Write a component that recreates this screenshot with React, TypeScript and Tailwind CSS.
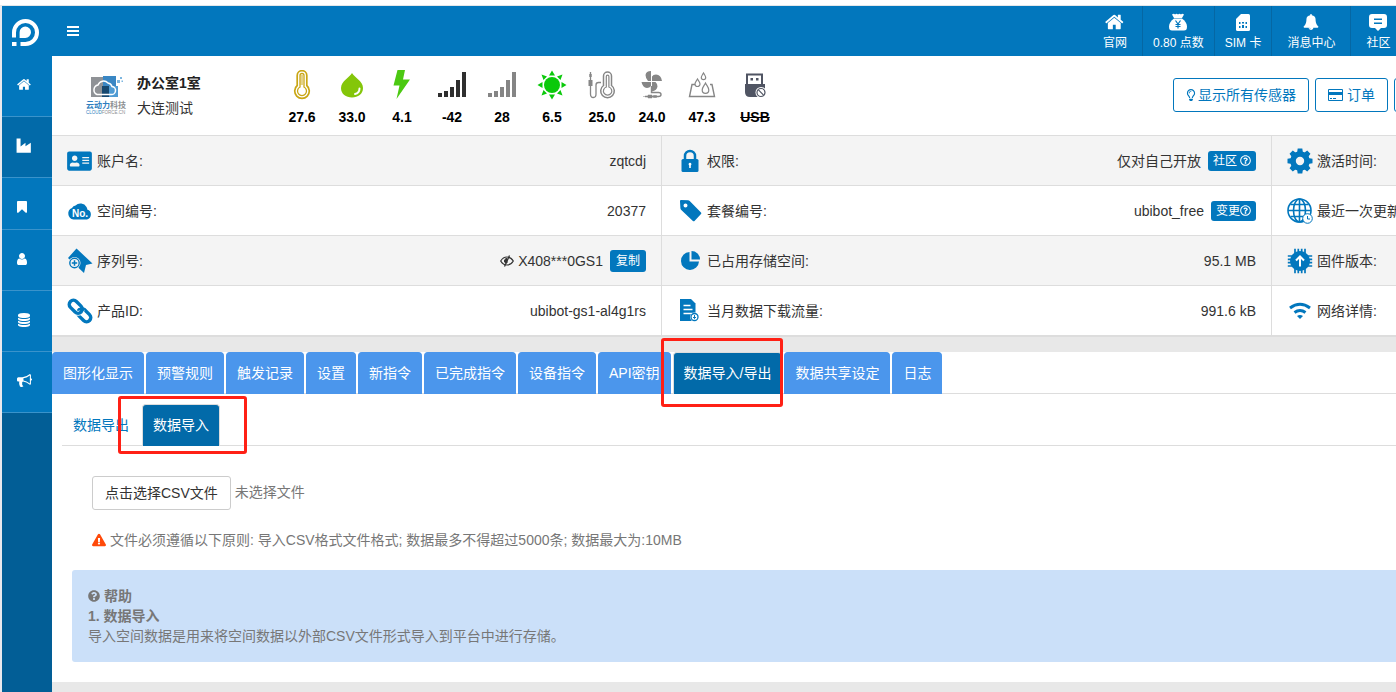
import React from "react";
import {
  FaAddressCard,
  FaExclamationTriangle,
  FaQuestionCircle,
  FaRegLightbulb,
  FaRegQuestionCircle,
} from "react-icons/fa";

const paths = {
  home: "M1408 992v480q0 26-19 45t-45 19h-384v-384h-256v384h-384q-26 0-45-19t-19-45v-480q0-1 .5-3t.5-3l575-474 575 474q1 2 1 6zm223-69l-62 74q-8 9-21 11h-3q-13 0-21-7l-692-577-692 577q-12 8-24 7-13-2-21-11l-62-74q-8-10-7-23.5t11-21.5l719-599q32-26 76-26t76 26l244 204v-195q0-14 9-23t23-9h192q14 0 23 9t9 23v408l219 182q10 8 11 21.5t-7 23.5z",
  industry: "M64 64h448v900l550-420v380l600-380v1120H64z",
  bookmark:
    "M1420 128q23 0 44 9 33 13 52.5 41t19.5 62v1289q0 34-19.5 62t-52.5 41q-19 8-44 8-48 0-83-32l-441-424-441 424q-36 33-83 33-23 0-44-9-33-13-52.5-41t-19.5-62v-1289q0-34 19.5-62t52.5-41q21-9 44-9h1048z",
  user: "M1536 1399q0 109-62.5 187t-150.5 78h-854q-88 0-150.5-78t-62.5-187q0-85 8.5-160.5t31.5-152 58.5-131 94-89 134.5-34.5q131 128 313 128t313-128q76 0 134.5 34.5t94 89 58.5 131 31.5 152 8.5 160.5zm-256-887q0 159-112.5 271.5t-271.5 112.5-271.5-112.5-112.5-271.5 112.5-271.5 271.5-112.5 271.5 112.5 112.5 271.5z",
  database:
    "M896 768q237 0 443-43t325-127v170q0 69-103 128t-280 93.5-385 34.5-385-34.5-280-93.5-103-128v-170q119 84 325 127t443 43zm0 768q237 0 443-43t325-127v170q0 69-103 128t-280 93.5-385 34.5-385-34.5-280-93.5-103-128v-170q119 84 325 127t443 43zm0-384q237 0 443-43t325-127v170q0 69-103 128t-280 93.5-385 34.5-385-34.5-280-93.5-103-128v-170q119 84 325 127t443 43zm0-1152q208 0 385 34.5t280 93.5 103 128v128q0 69-103 128t-280 93.5-385 34.5-385-34.5-280-93.5-103-128v-128q0-69 103-128t280-93.5 385-34.5z",
  bullhorn:
    "M1664 640q53 0 90.5 37.5t37.5 90.5-37.5 90.5-90.5 37.5v384q0 52-38 90t-90 38q-417-347-812-380-58 19-91 66t-31 100.5 40 92.5q-20 33-23 65.5t6 58 33.5 55 48 50 61.5 50.5q-29 58-111.5 83t-168.5 11.5-132-55.5q-7-23-29.5-87.5t-32-94.5-23-89-15-101 3.5-98.5 22-110.5h-122q-66 0-113-47t-47-113v-192q0-66 47-113t113-47h480q435 0 896-384 52 0 90 38t38 90v384zm-128 604v-954q-394 302-768 343v270q377 42 768 341z",
  bell: "M912 1696q0-16-16-16-59 0-101.5-42.5t-42.5-101.5q0-16-16-16t-16 16q0 73 51.5 124.5t124.5 51.5q16 0 16-16zm816-288q0 52-38 90t-90 38h-448q0 106-75 181t-181 75-181-75-75-181h-448q-52 0-90-38t-38-90q50-42 91-88t85-119.5 74.5-158.5 50-206 19.5-260q0-152 117-282.5t307-158.5q-8-19-8-39 0-40 28-68t68-28 68 28 28 68q0 20-8 39 190 28 307 158.5t117 282.5q0 139 19.5 260t50 206 74.5 158.5 85 119.5 91 88z",
};

function Glyph({ name, className }: { name: keyof typeof paths; className: string }) {
  return (
    <svg viewBox="0 0 1792 1792" fill="currentColor" className={className} aria-hidden="true">
      <path d={paths[name]} />
    </svg>
  );
}

/* ---------- Sidebar ---------- */

const sideItems: { name: keyof typeof paths; label: string; cls: string; icon: string }[] = [
  { name: "home", label: "首页", cls: "h-[61px] bg-[#0277bd] pr-[6px] pb-[3px]", icon: "size-[15px]" },
  { name: "industry", label: "产品", cls: "h-[61px] bg-[#026aa9] pr-[6px] pb-[3px]", icon: "size-4" },
  { name: "bookmark", label: "书签", cls: "h-[52px] bg-[#0277bd] pt-[6px] pr-[10px]", icon: "size-[14px]" },
  { name: "user", label: "用户", cls: "h-[61px] bg-[#0277bd] pr-[10px] pb-[3px]", icon: "size-[14px]" },
  { name: "database", label: "数据", cls: "h-[61px] bg-[#0277bd] pr-[6px] pb-[3px]", icon: "size-[14px]" },
  { name: "bullhorn", label: "公告", cls: "h-[61px] bg-[#0277bd] pr-[6px] pb-[3px]", icon: "size-[15px]" },
];

function Sidebar() {
  return (
    <aside className="flex w-[50px] shrink-0 flex-col bg-[#025e96] text-white">
      <a href="#" aria-label="UbiBot" className="flex h-[50px] items-center bg-[#0277bd] pt-[2px] pl-[10px]">
        <svg viewBox="0 0 27 27" className="size-[27px]" aria-hidden="true">
          <path d="M2 18.500V13.500A11.500 11.500 0 1 1 13.500 25H8.500" fill="none" stroke="#fff" strokeWidth="4" />
          <path d="M0 23h4.500v4H0z" fill="#fff" />
          <path d="M7.600 19V13.300a5.700 5.700 0 1 1 5.700 5.700z" fill="#fff" />
        </svg>
      </a>
      <nav>
        {sideItems.map((it) => (
          <a
            key={it.name}
            href="#"
            aria-label={it.label}
            className={`flex items-center justify-center border-b border-[#3a93cb] ${it.cls}`}
          >
            <Glyph name={it.name} className={it.icon} />
          </a>
        ))}
      </nav>
    </aside>
  );
}

/* ---------- Top bar ---------- */

function MoneyBag() {
  return (
    <svg viewBox="0 0 20 20" className="size-5" aria-hidden="true">
      <path d="M4 2.500q2-1.500 3 0 1.500-1.500 3 0 1.500-1.500 3 0 1-1.500 3 0L14 6H6z" fill="#fff" />
      <path d="M6 6.500h8c3 2 5 5 5 8 0 3-1 4-3 4H4c-2 0-3-1-3-4 0-3 2-6 5-8z" fill="#fff" />
      <path d="M7.500 8.500l2.500 3.500 2.500-3.500M10 12v4.500M7.500 12.500h5M7.500 14.500h5" fill="none" stroke="#0277bd" strokeWidth="1.200" />
    </svg>
  );
}

function SimCard() {
  return (
    <svg viewBox="0 0 14 17" className="h-[17px] w-[14px]" aria-hidden="true">
      <path d="M5 0h7.500Q14 0 14 1.500v14q0 1.500-1.500 1.500h-11Q0 17 0 15.500V5z" fill="#fff" />
      <path
        d="M3 8h1.500v2H3zM3 12h1.500v2H3zM6 8h2v1.500H6zM6 11h2v3H6zM9.500 8H11v2H9.500zM9.500 12H11v2H9.500z"
        fill="#0277bd"
      />
    </svg>
  );
}

function ChatBox() {
  return (
    <svg viewBox="0 0 18 17" className="h-[17px] w-[18px]" aria-hidden="true">
      <path d="M3 0h12q3 0 3 3v8q0 3-3 3h-3l-3 3-3-3H3q-3 0-3-3V3q0-3 3-3z" fill="#fff" />
      <path d="M5 5.250h8M5 9.250h8" stroke="#0277bd" strokeWidth="1.500" />
    </svg>
  );
}

const topItems = [
  { label: "官网", icon: <Glyph name="home" className="size-5" />, cls: "px-[15px]" },
  { label: "0.80 点数", icon: <MoneyBag />, cls: "border-l px-[10px]" },
  { label: "SIM 卡", icon: <SimCard />, cls: "border-l px-[10px]" },
  { label: "消息中心", icon: <Glyph name="bell" className="size-4" />, cls: "border-l px-[15px]" },
  { label: "社区", icon: <ChatBox />, cls: "border-l px-[15px]" },
];

function TopBar() {
  return (
    <header className="flex h-[50px] items-stretch justify-between bg-[#0277bd] text-white">
      <button type="button" aria-label="菜单" className="px-[15px]">
        <svg viewBox="0 0 12 10" className="h-[10px] w-3" fill="#fff" aria-hidden="true">
          <path d="M0 0h12v2H0zM0 4h12v2H0zM0 8h12v2H0z" />
        </svg>
      </button>
      <nav className="flex w-[308px] shrink-0 overflow-hidden text-xs">
        {topItems.map((t) => (
          <a
            key={t.label}
            href="#"
            className={`flex shrink-0 flex-col items-center border-[#0567a3] pt-[5px] leading-5 whitespace-nowrap ${t.cls}`}
          >
            <span className="flex h-[22px] items-center">{t.icon}</span>
            <span>{t.label}</span>
          </a>
        ))}
      </nav>
    </header>
  );
}

/* ---------- Device summary ---------- */

function CompanyLogo() {
  return (
    <svg viewBox="0 0 44 40" className="h-10 w-11" aria-hidden="true">
      <path d="M6 1h13v20H6z" fill="#8f9296" />
      <path d="M18 0h13v13H18z" fill="#3a87c4" />
      <path d="M17 10h7v11h-7z" fill="#17486f" />
      <path d="M24 10h9v11h-9z" fill="#4f9bd3" />
      <path d="M35 1h2v2h-2zM32 4h3v3h-3zM36.500 4.500h1.500v1.500h-1.500z" fill="#7db6df" />
      <path
        d="M12 18.500h14a4 4 0 0 0 1-8 5 5 0 0 0-4-3.500 6 6 0 0 0-10 2 5 5 0 0 0-1 9.500z"
        fill="none"
        stroke="#fff"
        strokeWidth="1.500"
      />
      <text x="1" y="32" fontSize="8" fontWeight="700" fontFamily="Noto Sans CJK SC, sans-serif" fill="#2f7fc0">
        云动力<tspan fill="#8c8f92">科技</tspan>
      </text>
      <text x="1" y="38" fontSize="4.5" fontFamily="Liberation Sans, sans-serif" fill="#2f7fc0">
        CLOUD<tspan fill="#8c8f92">FORCE.CN</tspan>
      </text>
    </svg>
  );
}

function Bars({ color }: { color: string }) {
  return (
    <svg viewBox="0 0 30 30" className="size-[30px]" fill={color} aria-hidden="true">
      <path d="M1 23h4v4H1zM7 21h4v6H7zM13 17h4v10h-4zM19 10h4v17h-4zM25 2h4v25h-4z" />
    </svg>
  );
}

const Svg30 = ({ children }: { children: React.ReactNode }) => (
  <svg viewBox="0 0 30 30" className="size-[30px]" fill="none" aria-hidden="true">
    {children}
  </svg>
);

const sensors = [
  {
    value: "27.6",
    icon: (
      <Svg30>
        <path d="M10.200 15.500V5.500a4.800 4.800 0 0 1 9.600 0v10a7.300 7.300 0 1 1-9.600 0z" stroke="#c9a614" strokeWidth="1.700" />
        <path d="M13 17V5.500a2 2 0 0 1 4 0V17a4.500 4.500 0 1 1-4 0z" stroke="#c9a614" strokeWidth="1.300" />
        <path d="M13.500 6h2.500M13.500 8h2.500M13.500 10h2.500M13.500 12h2.500M13.500 14h2.500" stroke="#c9a614" strokeWidth="1.200" />
      </Svg30>
    ),
  },
  {
    value: "33.0",
    icon: (
      <Svg30>
        <path d="M15 3c2 4 11 8 11 15C26 24 21 27.500 15 27.500S4 24 4 18C4 11 13 7 15 3z" fill="#84c60a" />
        <path d="M22.500 18.500c0 3-2 5-4.500 5.500" stroke="#fff" strokeWidth="2" strokeLinecap="round" />
      </Svg30>
    ),
  },
  {
    value: "4.1",
    icon: (
      <Svg30>
        <path d="M10.500 0h7.500l-2 9.500h7L9.500 29l3-13.500H6.500z" fill="#4cc912" />
      </Svg30>
    ),
  },
  { value: "-42", icon: <Bars color="#2f2f2f" /> },
  { value: "28", icon: <Bars color="#858585" /> },
  {
    value: "6.5",
    icon: (
      <Svg30>
        <circle cx="15" cy="15" r="8" fill="#0bc90b" />
        <path
          d="M12 5.500L15 .5l3 5zM12 24.500l3 5 3-5zM5.500 12L.5 15l5 3zM24.500 12l5 3-5 3zM10 6.500L4.500 4.500l2 5.500zM20 6.500l5.500-2-2 5.500zM10 23.500l-5.500 2 2-5.500zM20 23.500l5.500 2-2-5.500z"
          fill="#0bc90b"
        />
      </Svg30>
    ),
  },
  {
    value: "25.0",
    icon: (
      <Svg30>
        <path d="M16.500 15.500V6a4 4 0 0 1 8 0v9.500a6.800 6.800 0 1 1-8 0z" stroke="#868686" strokeWidth="1.500" />
        <path d="M19.300 17V6.500a1.300 1.300 0 0 1 2.600 0V17a4.200 4.200 0 1 1-2.600 0z" stroke="#868686" strokeWidth="1.200" />
        <path d="M3.500 2v8M3.500 16v8q0 3.500 2.800 3.500T9 24V15q0-2.500 2.500-2.500H14" stroke="#868686" strokeWidth="1.300" />
        <path d="M1.500 10h4v6h-4zM2.300 4h2.400v3H2.300z" fill="#868686" />
      </Svg30>
    ),
  },
  {
    value: "24.0",
    icon: (
      <Svg30>
        <path
          d="M14 1v10h-3Q8.500 8 8.500 5 9 1 14 1zM15 11h10q-1-6.500-6-6.500-3 0-4 2zM15 12v9.500q5-1 5.500-5 0-3-2-4.500zM14 12H4.500q1 5.500 5.500 6 2.500 0 4-2z"
          fill="#868686"
        />
        <path d="M14.500 16v6.500h7q2.500 0 2.500 2t-2.500 2H8" stroke="#868686" strokeWidth="1.400" />
        <path d="M6 26.500h8M11 25h4v3h-4zM16.500 25.500h3v2h-3z" fill="#868686" stroke="#868686" strokeWidth=".5" />
      </Svg30>
    ),
  },
  {
    value: "47.3",
    icon: (
      <Svg30>
        <path d="M8 14.500H5L2.500 26.500h25L25 14.500h-2" stroke="#868686" strokeWidth="1.400" />
        <path
          d="M10.500 9c1 2 2.500 3.200 2.500 5a2.500 2.500 0 0 1-5 0c0-1.800 1.500-3 2.500-5zM16.500 3c1 1.800 2.200 3 2.200 4.500a2.200 2.200 0 0 1-4.400 0C14.300 6 15.500 4.800 16.500 3zM18.500 13c1.500 3 3.300 4.500 3.300 7a3.300 3.300 0 0 1-6.600 0c0-2.500 1.800-4 3.300-7z"
          stroke="#868686"
          strokeWidth="1.200"
        />
      </Svg30>
    ),
  },
  {
    value: "USB",
    icon: (
      <Svg30>
        <path d="M7 14V4.500h15V14" stroke="#505563" strokeWidth="2" />
        <path d="M10.500 8h2.500v2.500h-2.500zM16 8h2.500v2.500H16z" fill="#505563" />
        <path d="M5 14h20v8q0 5-5 5H10q-5 0-5-5z" fill="#505563" />
        <circle cx="21" cy="22.500" r="5.500" fill="#fff" />
        <circle cx="21" cy="22.500" r="4" stroke="#505563" strokeWidth="1.200" />
        <path d="M18.200 19.700l5.600 5.600" stroke="#505563" strokeWidth="1.200" />
      </Svg30>
    ),
  },
];

function Summary() {
  return (
    <section className="flex h-[79px] justify-between overflow-hidden">
      <div className="flex">
        <div className="w-[85px] pt-5 pl-[33px]">
          <CompanyLogo />
        </div>
        <div className="w-[140px] pt-[15px] text-sm leading-[25px] text-[#333]">
          <h1 className="font-bold text-[#222]">办公室1室</h1>
          <p>大连测试</p>
        </div>
        <ul className="flex pt-[14px]">
          {sensors.map((s) => (
            <li
              key={s.value}
              className={`flex flex-col items-center text-sm leading-[34px] font-bold text-black ${
                s.value === "USB" ? "w-14 line-through" : "w-[50px]"
              }`}
            >
              {s.icon}
              <span>{s.value}</span>
            </li>
          ))}
        </ul>
      </div>
      <div className="flex w-[223px] shrink-0 gap-[6px] overflow-hidden pt-[22px] text-sm text-[#0277bd]">
        <button
          type="button"
          className="flex h-[34px] shrink-0 items-center gap-[2px] rounded-[3px] border border-[#0277bd] px-3 whitespace-nowrap"
        >
          <FaRegLightbulb className="h-3 w-[10px]" />
          显示所有传感器
        </button>
        <button
          type="button"
          className="flex h-[34px] shrink-0 items-center gap-1 rounded-[3px] border border-[#0277bd] px-3 whitespace-nowrap"
        >
          <svg viewBox="0 0 15 12" className="h-3 w-[15px]" aria-hidden="true">
            <path d="M.5.5h14v11H.5z" fill="none" stroke="currentColor" />
            <path d="M0 3h15v3H0zM2 9h2v1H2zM5 9h3v1H5z" fill="currentColor" />
          </svg>
          订单
        </button>
        <button
          type="button"
          aria-label="更多"
          className="h-[34px] w-10 shrink-0 rounded-[3px] border border-[#0277bd]"
        />
      </div>
    </section>
  );
}

/* ---------- Details ---------- */

const Svg26 = ({ children }: { children: React.ReactNode }) => (
  <svg viewBox="0 0 26 26" className="size-[26px] shrink-0" fill="currentColor" aria-hidden="true">
    {children}
  </svg>
);

function Badge({ children }: { children: React.ReactNode }) {
  return (
    <button
      type="button"
      className="ml-[7px] flex h-5 items-center rounded-[3px] bg-[#0277bd] px-[5px] text-xs whitespace-nowrap text-white"
    >
      {children}
    </button>
  );
}

type Detail = { label: string; icon: React.ReactNode; value?: React.ReactNode };

const gearTeeth = [0, 45, 90, 135];

const details: Detail[] = [
  { label: "账户名:", icon: <FaAddressCard className="h-[22px] w-[25px] shrink-0" />, value: "zqtcdj" },
  {
    label: "权限:",
    icon: (
      <Svg26>
        <path d="M8 12V8a5 5 0 0 1 10 0v4" fill="none" stroke="currentColor" strokeWidth="2.500" />
        <path d="M6 11h14q1.500 0 1.500 1.500v10q0 1.500-1.500 1.500H6q-1.500 0-1.500-1.500v-10Q4.500 11 6 11z" />
        <path d="M13 14.800a1.500 1.500 0 0 1 .8 2.700V20h-1.600v-2.500a1.500 1.500 0 0 1 .8-2.700z" fill="#fff" />
      </Svg26>
    ),
    value: (
      <>
        仅对自己开放
        <Badge>
          社区
          <FaRegQuestionCircle className="ml-[3px] size-[11px]" />
        </Badge>
      </>
    ),
  },
  {
    label: "激活时间:",
    icon: (
      <Svg26>
        <circle cx="13" cy="13" r="7" fill="none" stroke="currentColor" strokeWidth="5.600" />
        {gearTeeth.map((a) => (
          <path
            key={a}
            transform={`rotate(${a} 13 13)`}
            d="M10 5L10.700.5h4.600l.7 4.500zM10 21l.7 4.500h4.600L16 21z"
          />
        ))}
      </Svg26>
    ),
  },
  {
    label: "空间编号:",
    icon: (
      <Svg26>
        <path d="M6.500 21.500A6 6 0 0 1 5 10 5 5 0 0 1 8.500 7.500a7 7 0 0 1 11 1.500q1 1.500.7 2.500a5.200 5.200 0 0 1-.2 10z" />
        <text x="13" y="18.500" fontSize="10" fontWeight="700" textAnchor="middle" fontFamily="Liberation Sans, sans-serif" fill="#fff">
          No.
        </text>
      </Svg26>
    ),
    value: "20377",
  },
  {
    label: "套餐编号:",
    icon: (
      <Svg26>
        <path
          fillRule="evenodd"
          d="M3 3.500Q2.500 2 4 2l7 .3q1 .1 1.700.8L24 14.500q.8.800 0 1.600L17.500 23q-.8.700-1.600 0L4.300 12q-.8-.8-.9-1.700zM8.500 5.500a2 2 0 1 0 0 4 2 2 0 1 0 0-4z"
        />
      </Svg26>
    ),
    value: (
      <>
        ubibot_free
        <Badge>
          变更
          <FaRegQuestionCircle className="size-[11px]" />
        </Badge>
      </>
    ),
  },
  {
    label: "最近一次更新:",
    icon: (
      <Svg26>
        <g fill="none" stroke="currentColor" strokeWidth="1.600">
          <circle cx="12.500" cy="12.500" r="11.500" />
          <ellipse cx="12.500" cy="12.500" rx="6" ry="11.500" />
          <path d="M12.500 1v23M1 12.500h23M3.500 6.500h18M3.500 18.500h18" />
          <circle cx="20.500" cy="20.500" r="4.800" fill="#fff" strokeWidth="1" />
          <path d="M20.500 18v3h2.500" strokeWidth="1" />
        </g>
      </Svg26>
    ),
  },
  {
    label: "序列号:",
    icon: (
      <Svg26>
        <path d="M9.500.5L25.500 15.500 19 17l-2 8L1 10z" />
        <circle cx="7.500" cy="15" r="6" fill="#f4f4f4" />
        <circle cx="7.500" cy="15" r="4.700" fill="none" stroke="currentColor" strokeWidth="1.400" />
        <path d="M7.500 12.300v5.400M4.800 15h5.400" stroke="currentColor" strokeWidth="1.500" />
      </Svg26>
    ),
    value: (
      <>
        <svg viewBox="0 0 14 12" className="mr-1 h-3 w-[14px]" fill="none" stroke="currentColor" aria-hidden="true">
          <path d="M.7 6Q3 2 7 2t6.300 4Q11 10 7 10T.7 6z" strokeWidth="1.200" />
          <path d="M7 3.500a2.500 2.500 0 0 0-2.300 3.700L7 8z" fill="currentColor" />
          <path d="M9.500.5l-5 11" strokeWidth="1.300" />
        </svg>
        X408***0GS1
        <button
          type="button"
          className="ml-[7px] h-[22px] rounded-[3px] bg-[#0277bd] px-[6px] text-xs whitespace-nowrap text-white"
        >
          复制
        </button>
      </>
    ),
  },
  {
    label: "已占用存储空间:",
    icon: (
      <Svg26>
        <path d="M12.500 4v9.500H22A9 9 0 1 1 12.500 4z" />
        <path d="M14.500 3a8.500 8.500 0 0 1 8.500 8.500h-8.500z" />
      </Svg26>
    ),
    value: "95.1 MB",
  },
  {
    label: "固件版本:",
    icon: (
      <Svg26>
        <path
          d="M8 .8v24.400M11.300.8v24.400M14.700.8v24.400M18 .8v24.400M.8 8h24.400M.8 11.300h24.400M.8 14.700h24.400M.8 18h24.400"
          stroke="currentColor"
          strokeWidth="1.700"
        />
        <circle cx="13" cy="13" r="10" />
        <path d="M13 18.500v-9.500M9 12.500l4-4 4 4" fill="none" stroke="#fff" strokeWidth="2" />
      </Svg26>
    ),
  },
  {
    label: "产品ID:",
    icon: (
      <Svg26>
        <g transform="rotate(45 13 13)" fill="none">
          <rect x="11.500" y="8.800" width="15" height="8.400" rx="4.200" stroke="currentColor" strokeWidth="3.400" />
          <rect x="-.5" y="8.800" width="15" height="8.400" rx="4.200" stroke="#fff" strokeWidth="4.800" />
          <rect x="-.5" y="8.800" width="15" height="8.400" rx="4.200" stroke="currentColor" strokeWidth="3.400" />
          <path d="M15.500 8.800a4.200 4.200 0 0 0-4 4.200" stroke="currentColor" strokeWidth="3" />
        </g>
      </Svg26>
    ),
    value: "ubibot-gs1-al4g1rs",
  },
  {
    label: "当月数据下载流量:",
    icon: (
      <Svg26>
        <path d="M3 1h11l4.500 4.500V23H3z" />
        <path d="M6.500 7.500h7M6.500 11.500h9M6.500 15.500h9" stroke="#fff" strokeWidth="1.500" />
        <circle cx="17.500" cy="19" r="4.500" fill="#fff" />
        <circle cx="17.500" cy="19" r="3.500" fill="none" stroke="currentColor" strokeWidth="1.300" />
        <path d="M17.500 17v3.500M16 19l1.500 1.500L19 19" fill="none" stroke="currentColor" />
      </Svg26>
    ),
    value: "991.6 kB",
  },
  {
    label: "网络详情:",
    icon: (
      <Svg26>
        <g fill="none" stroke="currentColor" strokeWidth="3">
          <path d="M3 10q10-7.500 20 0" />
          <path d="M7.500 14.500q5.500-4 11 0" />
        </g>
        <path d="M10 18q3-2 6 0l-3 3z" />
      </Svg26>
    ),
  },
];

const rowBg = ["bg-[#f4f4f4]", "bg-white", "bg-[#f4f4f4]", "bg-white"];

function Details() {
  return (
    <dl className="grid grid-cols-[1fr_1fr_124px] overflow-hidden border-b-2 border-[#ddd] text-sm text-[#333]">
      {details.map((d, i) => (
        <div
          key={d.label}
          className={`flex h-[50px] min-w-0 items-center justify-between border-t border-[#ddd] px-[15px] whitespace-nowrap ${
            rowBg[Math.floor(i / 3)]
          } ${i % 3 < 2 ? "border-r" : ""}`}
        >
          <dt className="flex items-center">
            <span className="flex w-[30px] shrink-0 items-center text-[#0277bd]">
              <span className="flex w-[25px] justify-center">{d.icon}</span>
            </span>
            {d.label}
          </dt>
          {d.value && <dd className="flex items-center">{d.value}</dd>}
        </div>
      ))}
    </dl>
  );
}

/* ---------- Tabs ---------- */

const tabs = [
  "图形化显示",
  "预警规则",
  "触发记录",
  "设置",
  "新指令",
  "已完成指令",
  "设备指令",
  "API密钥",
  "数据导入/导出",
  "数据共享设定",
  "日志",
];

function Tabs() {
  return (
    <div role="tablist" className="flex gap-[2px] border-b border-[#ddd]">
      {tabs.map((t) => {
        const active = t === "数据导入/导出";
        return (
          <div key={t} className="relative -mb-px">
            <button
              type="button"
              role="tab"
              aria-selected={active}
              className={`block h-[42px] rounded-t border border-b-0 px-[10px] pb-[2px] text-sm whitespace-nowrap text-white ${
                active ? "border-[#ddd] bg-[#026aa9]" : "border-[#4b96ec] bg-[#4b96ec]"
              }`}
            >
              {t}
            </button>
            {active && (
              <span className="pointer-events-none absolute -top-[14px] -right-px -bottom-[13px] -left-3 z-10 rounded-[3px] border-3 border-[#ff2015]" />
            )}
          </div>
        );
      })}
    </div>
  );
}

function SubTabs() {
  return (
    <div role="tablist" className="ml-[10px] flex gap-[2px] border-b border-[#ddd] pt-[10px] text-sm">
      <button type="button" role="tab" aria-selected={false} className="h-[41px] px-[11px] text-[#0277bd]">
        数据导出
      </button>
      <div className="relative -mb-px">
        <button
          type="button"
          role="tab"
          aria-selected={true}
          className="block h-[42px] rounded-t border border-b-0 border-[#ddd] bg-[#026aa9] px-[10px] pb-[2px] text-white"
        >
          数据导入
        </button>
        <span className="pointer-events-none absolute -top-2 -right-[27px] -bottom-2 -left-6 z-10 rounded-[3px] border-3 border-[#ff2015]" />
      </div>
    </div>
  );
}

/* ---------- Import panel ---------- */

function ImportPanel() {
  return (
    <div className="pb-5 text-sm leading-5 text-[#777]">
      <div className="flex items-center pt-[30px] pl-10">
        <input id="csv" type="file" accept=".csv" className="sr-only" />
        <label
          htmlFor="csv"
          className="flex h-[34px] cursor-pointer items-center rounded-[3px] border border-[#ccc] bg-white px-3 text-[#333]"
        >
          点击选择CSV文件
        </label>
        <span className="ml-1 pb-[2px]">未选择文件</span>
      </div>
      <p className="mt-5 flex items-center gap-1 pl-10">
        <FaExclamationTriangle className="size-[14px] text-[#ff4a0a]" />
        文件必须遵循以下原则: 导入CSV格式文件格式; 数据最多不得超过5000条; 数据最大为:10MB
      </p>
      <div className="mt-5 ml-5 rounded-l-[3px] bg-[#cbe0f9] p-4">
        <h2 className="flex items-center gap-1 font-bold">
          <FaQuestionCircle className="size-3" />
          帮助
        </h2>
        <h3 className="font-bold">1. 数据导入</h3>
        <p>导入空间数据是用来将空间数据以外部CSV文件形式导入到平台中进行存储。</p>
      </div>
    </div>
  );
}

export default function App() {
  return (
    <div className="flex min-h-screen flex-col overflow-hidden bg-white font-['Liberation_Sans','Noto_Sans_CJK_SC',sans-serif]">
      <div className="h-[6px] border-b border-[#e3e7ea] bg-white" />
      <div className="flex flex-1 border-l-2 border-[#e9e9ee]">
        <Sidebar />
        <div className="flex min-w-0 flex-1 flex-col bg-[#e8e8e8]">
          <TopBar />
          <main>
            <div className="bg-white">
              <Summary />
              <Details />
            </div>
            <div className="mt-[15px] bg-white">
              <Tabs />
              <SubTabs />
              <ImportPanel />
            </div>
          </main>
        </div>
      </div>
    </div>
  );
}
